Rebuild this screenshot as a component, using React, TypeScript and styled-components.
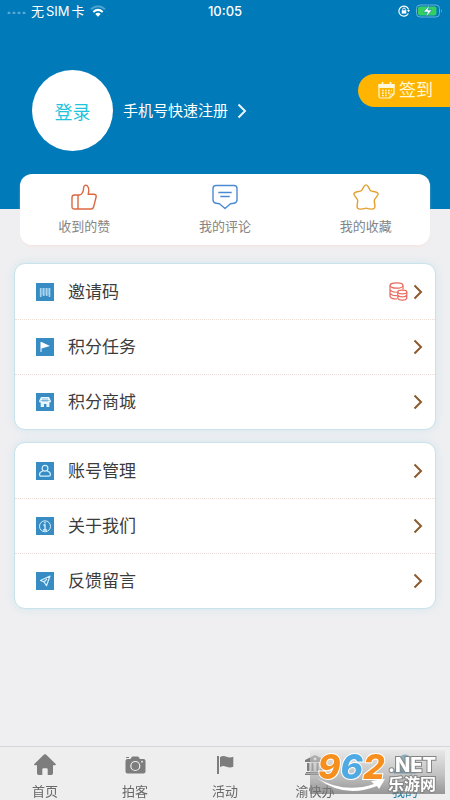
import React from "react";
import styled, { createGlobalStyle } from "styled-components";

const GlobalStyle = createGlobalStyle`
  *, *::before, *::after { box-sizing: border-box; }
  body {
    margin: 0;
    background: #efeff1;
    font-family: Inter, "Noto Sans CJK SC", sans-serif;
  }
  button { font: inherit; border: 0; padding: 0; background: none; cursor: pointer; }
  a { text-decoration: none; color: inherit; }
  svg { display: block; flex: none; }
`;

const Page = styled.div`
  min-height: 100vh;
  display: flex;
  flex-direction: column;
`;

const Hero = styled.header`
  background: #007ab8;
  color: #fff;
  padding-bottom: 58px;
`;

const StatusBar = styled.div`
  display: grid;
  grid-template-columns: 1fr auto 1fr;
  align-items: center;
  height: 22px;
  padding: 0 7px;
  font-size: 13px;
  font-weight: 500;
  line-height: 20px;
`;

const Carrier = styled.div`
  display: flex;
  align-items: center;
  gap: 5px;
  font-weight: 400;
`;

const CarrierName = styled.span`
  display: flex;
  gap: 2px;
`;

const Indicators = styled.div`
  display: flex;
  align-items: center;
  justify-content: flex-end;
  gap: 6px;
`;

const Account = styled.div`
  display: flex;
  align-items: center;
  margin-top: 48px;
  padding-left: 32px;
`;

const Avatar = styled.button`
  flex: none;
  width: 81px;
  height: 81px;
  border-radius: 50%;
  background: #fff;
  color: #1fc4dc;
  font-size: 18px;
`;

const Register = styled.a`
  display: flex;
  align-items: center;
  gap: 9px;
  margin-left: 10px;
  font-size: 15px;
  line-height: 22px;
  white-space: nowrap;
`;

const SignIn = styled.button`
  display: flex;
  align-items: center;
  align-self: flex-start;
  gap: 4px;
  height: 33px;
  margin: 4px 0 0 auto;
  padding: 0 17px 0 20px;
  border-radius: 17px 0 0 17px;
  background: #ffb500;
  color: #fff8da;
  font-size: 17px;
  line-height: 33px;
  white-space: nowrap;
`;

const Stats = styled.nav`
  position: relative;
  display: grid;
  grid-template-columns: repeat(3, 1fr);
  gap: 12px;
  margin: -35px 20px 0;
  padding: 10px 0 9px;
  border-radius: 12px;
  background: #fff;
  box-shadow: 0 2px 3px -1px #f6e3dc;
`;

const Stat = styled.a`
  display: flex;
  flex-direction: column;
  align-items: center;
  gap: 6px;
  color: #858585;
  font-size: 13px;
  line-height: 20px;
`;

const Menus = styled.main`
  flex: 1;
  display: flex;
  flex-direction: column;
  gap: 12px;
  padding: 18px 14px 24px 14px;
`;

const Menu = styled.section`
  border: 1px solid #c9e2ec;
  border-radius: 11px;
  background: #fff;
  box-shadow: 0 0 10px #d3e6ed;
`;

const MenuRow = styled.a`
  display: flex;
  align-items: center;
  gap: 14px;
  height: 55px;
  padding: 0 12px 0 21px;
  color: #3c3c3c;
  font-size: 17px;
  line-height: 26px;

  & + & { border-top: 1px dotted #ecdcd6; }
`;

const RowEnd = styled.span`
  display: flex;
  align-items: center;
  gap: 5px;
  margin-left: auto;
`;

const TabBar = styled.nav`
  position: sticky;
  bottom: 0;
  display: grid;
  grid-template-columns: repeat(5, 1fr);
  height: 54px;
  border-top: 1px solid #d6d6da;
  background: #eee;
`;

const Tab = styled.a<{ $active?: boolean }>`
  display: flex;
  flex-direction: column;
  align-items: center;
  gap: 4px;
  padding-top: 6px;
  color: ${(p) => (p.$active ? "#2580a8" : "#686868")};
  font-size: 13px;
  line-height: 20px;

  svg { color: ${(p) => (p.$active ? "#2580a8" : "#7d7d7d")}; }
`;

const SiteMark = styled.aside`
  position: absolute;
  right: 5px;
  bottom: 6px;
  display: grid;
  grid-template-columns: 70px auto;
  width: 135px;
  height: 44px;
  padding-left: 8px;
  color: #fff;
  background: linear-gradient(#e2e2e290, #a6a6a698 55%, #6f6f6fb0);
`;

const Digits = styled.div`
  font: italic 800 34px/34px Inter, sans-serif;
  white-space: nowrap;
  -webkit-text-stroke: 2px #fff;
  paint-order: stroke fill;
`;

const Digit = styled.span<{ $blue?: boolean }>`
  color: ${(p) => (p.$blue ? "#4fa9e2" : "#f78f1e")};
`;

const SiteWords = styled.div`
  display: flex;
  flex-direction: column;
  padding-top: 6px;
  -webkit-text-stroke: 2px #858585;
  paint-order: stroke fill;
`;

const Domain = styled.span`
  font: 800 20px/19px Inter, sans-serif;
`;

const SiteName = styled.span`
  font: 700 16px/17px "Noto Sans CJK SC", sans-serif;
`;

const Swoosh = styled.svg`
  position: absolute;
  left: 6px;
  bottom: 0;
`;

const Chevron = ({ color = "#8b5a2e" }: { color?: string }) => (
  <svg width="10" height="16" viewBox="0 0 10 16" fill="none" stroke={color} strokeWidth="2">
    <path d="M1.500 1.500 8 8l-6.500 6.500" />
  </svg>
);

const Signal = () => (
  <svg width="19" height="5" viewBox="0 0 19 5" fill="#58a9d3">
    <circle cx="2" cy="4" r="1.500" /><circle cx="7" cy="4" r="1.500" />
    <circle cx="12" cy="4" r="1.500" /><circle cx="17" cy="4" r="1.500" />
  </svg>
);

const Wifi = () => (
  <svg width="16" height="12" viewBox="0 0 16 12" fill="none">
    <path d="M1 4.300Q8-1.700 15 4.300" stroke="#4da3cf" strokeWidth="2" />
    <path d="M3.300 6.900Q8 2.900 12.700 6.900" stroke="#fff" strokeWidth="2" />
    <path d="M5.300 8.900Q8 6.500 10.700 8.900L8 11.700Z" fill="#fff" />
  </svg>
);

const RotationLock = () => (
  <svg width="12" height="12" viewBox="0 0 12 12" fill="none" stroke="#fff">
    <path d="M10.600 4.500A5 5 0 1 0 10.300 8.500" strokeWidth="1.200" />
    <path d="M9 5h3l-1.400 2.300Z" fill="#fff" stroke="none" />
    <rect x="3.700" y="5.300" width="4.600" height="3.300" fill="#fff" stroke="none" />
    <path d="M4.700 5.500V4.300a1.300 1.300 0 0 1 2.600 0v1.200" />
  </svg>
);

const Battery = () => (
  <svg width="27" height="14" viewBox="0 0 27 14">
    <rect x=".5" y="1" width="23" height="12" rx="3.500" fill="none" stroke="#69b0d7" />
    <path d="M25 5q1.700 2 0 4Z" fill="#69b0d7" />
    <rect x="2" y="2.500" width="18.500" height="9" rx="2" fill="#35ce62" />
    <path d="M13.500 1 7.500 8h4l-1.500 5 6-7h-4Z" fill="#fff" stroke="#007ab8" strokeWidth=".5" />
  </svg>
);

const Calendar = () => (
  <svg width="17" height="17" viewBox="0 0 17 17" fill="none" stroke="currentColor">
    <path d="M1 2.500h15v9.500l-4 4H2.500Q1 16 1 14.500Z" strokeWidth="1.200" />
    <path d="M1 2.500h15v3H1Z" fill="currentColor" />
    <path d="M4.500 0v3M12.500 0v3" strokeWidth="1.700" />
    <path d="M4 8.500h10M4 11h8M4 13.500h6" strokeWidth="1.500" strokeDasharray="1.700 1.300" />
    <path d="M16 12h-2.500Q12 12 12 13.500V16" />
  </svg>
);

const ThumbIcon = () => (
  <svg width="26" height="26" viewBox="0 0 26 26" fill="none" stroke="#dc6840" strokeWidth="1.400" strokeLinejoin="round">
    <path d="M7 11h1.500c3.200-.7 4-3.800 4.200-7.500.2-2.300 2-2.800 3.500-1.800 2 1.500 1.800 5 1 8.600h5.500c2 0 2.800 1 2.400 2.700l-2.500 10c-.4 1.500-1.100 2-2.600 2H3.500C1.800 25 1 24.300 1 22.700v-9.200C1 11.800 1.800 11 3.500 11ZM7 11v14" />
  </svg>
);

const CommentIcon = () => (
  <svg width="26" height="26" viewBox="0 0 26 26" fill="none" stroke="#4b8ad3" strokeWidth="1.400" strokeLinejoin="round">
    <path d="M4 1.500h18q3 0 3 3v11.200q0 3-3 3.500l-3.500.6-5.500 4.700-5.500-4.700-3.500-.6q-3-.5-3-3.500V4.500q0-3 3-3ZM6.300 8.500h13.400M8.300 12.500h9.400" />
  </svg>
);

const StarIcon = () => (
  <svg width="26" height="26" viewBox="0 0 26 26" fill="none" stroke="#e4a02f" strokeWidth="1.400" strokeLinejoin="round">
    <path d="M11 2.300q2-2.800 4 0l2.100 3.800q.5.800 1.400 1l4.300.9q3.300.9 1.800 3.400l-2.900 3.900q-.5.700-.4 1.600l.6 4.700q.3 3.500-3 3.500-3.400-.1-5-.8-.9-.3-1.800 0-1.600.7-5 .8-3.300 0-3-3.500l.6-4.700q.1-.9-.4-1.600L1.400 11.400Q-.1 8.900 3.200 8l4.300-.9q.9-.2 1.400-1Z" />
  </svg>
);

const CoinsIcon = () => (
  <svg width="19" height="19" viewBox="0 0 19 19" fill="none" stroke="#e96b5d" strokeWidth="1.200">
    <ellipse cx="7.500" cy="3.500" rx="6.500" ry="2.700" />
    <path d="M1 3.500v11Q1.800 17 8 17M14 3.500v4M1 7.500q1.500 3 7.500 2.700M1 11q1.500 3 7 2.600" />
    <ellipse cx="13.300" cy="10" rx="4.500" ry="1.800" />
    <path d="M8.800 10v6.300q1 1.900 4.500 1.900t4.500-1.900V10M8.800 13q1 1.900 4.500 1.900t4.500-1.900" />
  </svg>
);

const glyphs: Record<string, React.ReactNode> = {
  barcode: (
    <g fill="none" stroke="#a9d3ee">
      <path d="M4.700 5v9M7.700 5v8M10.700 5v8M13.500 5v9" strokeWidth="1.700" />
      <path d="M6.300 5v7M9.200 5v7M12.200 5v7" strokeWidth=".6" />
    </g>
  ),
  flag: <path d="M4.500 4v10h1v-3.500L14 8 5.500 4Z" fill="#fff" />,
  shop: (
    <>
      <path d="M5 4h8l2 4q-.2 1.800-1.600 1.500V14h-3v-3H8v3H4.700V9.500Q3.200 9.800 3 8Z" fill="#e7f6ff" />
      <path d="M4.500 7.500h9M7 5v4M9 5v4M11 5v4" stroke="#368cc3" strokeWidth=".5" />
    </>
  ),
  person: (
    <g fill="none" stroke="#d5effd" strokeWidth="1.200">
      <circle cx="9" cy="6.300" r="2.900" />
      <path d="M6.800 9Q3.500 10 3.500 12.500q0 1.700 2 1.700h7q2 0 2-1.700Q14.500 10 11.200 9" />
    </g>
  ),
  info: (
    <g fill="none" stroke="#d5effd">
      <circle cx="9" cy="9.300" r="5.500" />
      <path d="M7.300 8H9v5M7 13h4" strokeWidth="1.400" />
      <circle cx="9" cy="5.800" r=".8" fill="#fff" stroke="none" />
    </g>
  ),
  plane: <path d="M14 4 4.500 8.500 8 10l2.500 3.700Z M8 10l3-3" fill="none" stroke="#d5effd" strokeWidth="1.200" strokeLinejoin="round" />,
};

const Tile = ({ name }: { name: string }) => (
  <svg width="18" height="18" viewBox="0 0 18 18">
    <path d="M0 0h18v18H0Z" fill="#368cc3" />
    {glyphs[name]}
  </svg>
);

const tabGlyphs: Record<string, React.ReactNode> = {
  home: <path d="M12 1.200q.6 0 1 .4l9.700 9.400q.8 1-.5 1.300H20v8q0 1.700-1.700 1.700h-3.600v-5.500q0-1.200-1.200-1.200h-3q-1.200 0-1.200 1.200V22H5.700Q4 22 4 20.300v-8H1.800Q.5 12 1.300 11L11 1.600q.4-.4 1-.4Z" fill="currentColor" />,
  camera: (
    <>
      <path d="M3.500 6h4l1.200-2q.3-.5 1-.5h5q.7 0 1 .5l1.200 2h3.600q2 0 2 2v10.500q0 2-2 2h-16q-2 0-2-2V8q0-2 2-2Z" fill="currentColor" />
      <path d="M3 4h3v1H3Z" fill="currentColor" />
      <circle cx="12.300" cy="13" r="4.500" fill="none" stroke="#eee" strokeWidth="1.200" />
      <circle cx="19" cy="8.700" r=".9" fill="#eee" />
    </>
  ),
  flag: <path d="M4 3h2v18H4ZM7 4.200q3-2 6.500-.4t6.800 0v10q-3.300 1.600-6.800 0T7 14.200Z" fill="currentColor" />,
  bank: <path d="M12 2 22 7v2H2V7Zm0 2.500a1.500 1.500 0 1 0 .1 0ZM4 10h2.500v8H4Zm4.500 0h2v8h-2Zm5 0h2v8h-2Zm4 0H20v8h-2.500ZM3 19h18v1H3Zm-1 1.500h20v1.500H2Z" fill="currentColor" fillRule="evenodd" />,
  user: <path d="M12 1.500a5.500 5.500 0 0 1 3.500 9.800Q23 13 23.500 20.500H.5Q1 13 8.500 11.300A5.500 5.500 0 0 1 12 1.500Z" fill="currentColor" />,
};

const stats = [
  { label: "收到的赞", icon: <ThumbIcon /> },
  { label: "我的评论", icon: <CommentIcon /> },
  { label: "我的收藏", icon: <StarIcon /> },
];

const menus = [
  [
    { label: "邀请码", icon: "barcode", coins: true },
    { label: "积分任务", icon: "flag" },
    { label: "积分商城", icon: "shop" },
  ],
  [
    { label: "账号管理", icon: "person" },
    { label: "关于我们", icon: "info" },
    { label: "反馈留言", icon: "plane" },
  ],
];

const tabs = [
  { label: "首页", icon: "home" },
  { label: "拍客", icon: "camera" },
  { label: "活动", icon: "flag" },
  { label: "渝快办", icon: "bank" },
  { label: "我的", icon: "user", active: true },
];

export default function App() {
  return (
    <Page>
      <GlobalStyle />
      <Hero>
        <StatusBar>
          <Carrier>
            <Signal />
            <CarrierName><span>无</span><span>SIM</span><span>卡</span></CarrierName>
            <Wifi />
          </Carrier>
          <span>10:05</span>
          <Indicators><RotationLock /><Battery /></Indicators>
        </StatusBar>
        <Account>
          <Avatar type="button">登录</Avatar>
          <Register href="#register">手机号快速注册<Chevron color="#e6f6ff" /></Register>
          <SignIn type="button"><Calendar />签到</SignIn>
        </Account>
      </Hero>
      <Stats>
        {stats.map((s) => (
          <Stat href="#" key={s.label}>{s.icon}{s.label}</Stat>
        ))}
      </Stats>
      <Menus>
        {menus.map((rows) => (
          <Menu key={rows[0].label}>
            {rows.map((r) => (
              <MenuRow href="#" key={r.label}>
                <Tile name={r.icon} />
                {r.label}
                <RowEnd>
                  {"coins" in r && <CoinsIcon />}
                  <Chevron />
                </RowEnd>
              </MenuRow>
            ))}
          </Menu>
        ))}
      </Menus>
      <TabBar>
        {tabs.map((t) => (
          <Tab href="#" key={t.label} $active={t.active}>
            <svg width="24" height="24" viewBox="0 0 24 24">{tabGlyphs[t.icon]}</svg>
            {t.label}
          </Tab>
        ))}
        <SiteMark>
          <Digits><Digit>9</Digit><Digit $blue>6</Digit><Digit>2</Digit></Digits>
          <SiteWords>
            <Domain>.NET</Domain>
            <SiteName>乐游网</SiteName>
          </SiteWords>
          <Swoosh width="72" height="17" viewBox="0 0 72 17">
            <path d="M1 1Q28 17 58 7l-3-3 14-2-6 10-2-3Q28 22 1 1Z" fill="#fff" />
          </Swoosh>
        </SiteMark>
      </TabBar>
    </Page>
  );
}
